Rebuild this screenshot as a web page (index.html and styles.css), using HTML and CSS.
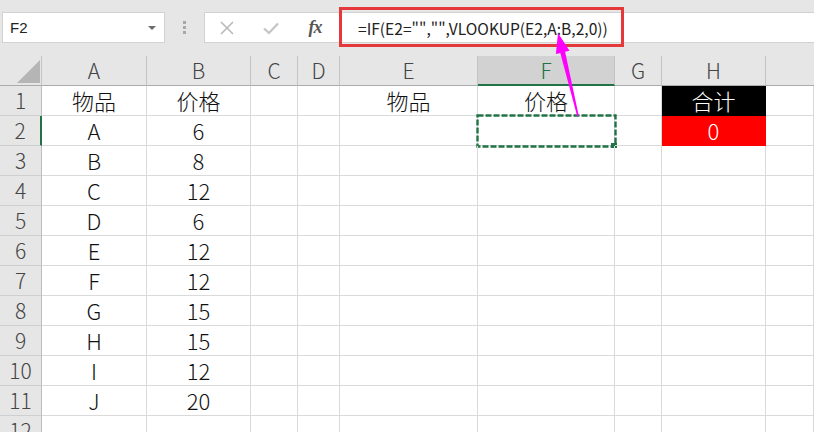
FILE: index.html
```html
<!DOCTYPE html>
<html lang="zh-CN">
<head>
<meta charset="utf-8">
<title>Excel VLOOKUP</title>
<link rel="stylesheet" href="styles.css">
</head>
<body>
<div class="app">
  <div class="toolbar">
    <div class="namebox"><span class="nb-text">F2</span><span class="caret"></span></div>
    <div class="grip"><i></i><i></i><i></i></div>
    <div class="fbar">
      <div class="ficons">
        <span class="fic"><svg width="16" height="16" viewBox="0 0 16 16"><path d="M2 2 L14 14 M14 2 L2 14" stroke="#b9b9b9" stroke-width="1.6" fill="none"/></svg></span>
        <span class="fic"><svg width="18" height="16" viewBox="0 0 18 16"><path d="M2 8.5 L7 13 L16 3.5" stroke="#c4c4c4" stroke-width="2.2" fill="none"/></svg></span>
        <span class="fic fx">fx</span>
      </div>
      <div class="ftext">=IF(E2="","",VLOOKUP(E2,A:B,2,0))</div>
    </div>
    <div class="hl"></div>
  </div>

  <div class="sheet">
    <div class="row hdr">
      <div class="corner"><svg width="42" height="30" viewBox="0 0 42 30"><polygon points="17,27 40,27 40,4" fill="#b5b5b5"/></svg></div>
      <div class="ch">A</div><div class="ch">B</div><div class="ch">C</div><div class="ch">D</div><div class="ch">E</div><div class="ch sel">F</div><div class="ch">G</div><div class="ch">H</div><div class="ch last"></div>
    </div>
    <div class="row">
      <div class="rh">1</div><div class="c">物品</div><div class="c">价格</div><div class="c"></div><div class="c"></div><div class="c">物品</div><div class="c">价格</div><div class="c"></div><div class="c black">合计</div><div class="c"></div>
    </div>
    <div class="row">
      <div class="rh selrow">2</div><div class="c">A</div><div class="c">6</div><div class="c"></div><div class="c"></div><div class="c"></div><div class="c active"><svg class="ants" width="141" height="34" viewBox="0 0 141 34"><rect x="1.5" y="1.5" width="138" height="31" fill="none" stroke="#217346" stroke-width="2.4" stroke-dasharray="6 2"/><rect x="135" y="29" width="6" height="5" fill="#217346"/></svg></div><div class="c"></div><div class="c red">0</div><div class="c"></div>
    </div>
    <div class="row">
      <div class="rh">3</div><div class="c">B</div><div class="c">8</div><div class="c"></div><div class="c"></div><div class="c"></div><div class="c"></div><div class="c"></div><div class="c"></div><div class="c"></div>
    </div>
    <div class="row">
      <div class="rh">4</div><div class="c">C</div><div class="c">12</div><div class="c"></div><div class="c"></div><div class="c"></div><div class="c"></div><div class="c"></div><div class="c"></div><div class="c"></div>
    </div>
    <div class="row">
      <div class="rh">5</div><div class="c">D</div><div class="c">6</div><div class="c"></div><div class="c"></div><div class="c"></div><div class="c"></div><div class="c"></div><div class="c"></div><div class="c"></div>
    </div>
    <div class="row">
      <div class="rh">6</div><div class="c">E</div><div class="c">12</div><div class="c"></div><div class="c"></div><div class="c"></div><div class="c"></div><div class="c"></div><div class="c"></div><div class="c"></div>
    </div>
    <div class="row">
      <div class="rh">7</div><div class="c">F</div><div class="c">12</div><div class="c"></div><div class="c"></div><div class="c"></div><div class="c"></div><div class="c"></div><div class="c"></div><div class="c"></div>
    </div>
    <div class="row">
      <div class="rh">8</div><div class="c">G</div><div class="c">15</div><div class="c"></div><div class="c"></div><div class="c"></div><div class="c"></div><div class="c"></div><div class="c"></div><div class="c"></div>
    </div>
    <div class="row">
      <div class="rh">9</div><div class="c">H</div><div class="c">15</div><div class="c"></div><div class="c"></div><div class="c"></div><div class="c"></div><div class="c"></div><div class="c"></div><div class="c"></div>
    </div>
    <div class="row">
      <div class="rh">10</div><div class="c">I</div><div class="c">12</div><div class="c"></div><div class="c"></div><div class="c"></div><div class="c"></div><div class="c"></div><div class="c"></div><div class="c"></div>
    </div>
    <div class="row">
      <div class="rh">11</div><div class="c">J</div><div class="c">20</div><div class="c"></div><div class="c"></div><div class="c"></div><div class="c"></div><div class="c"></div><div class="c"></div><div class="c"></div>
    </div>
    <div class="row">
      <div class="rh">12</div><div class="c"></div><div class="c"></div><div class="c"></div><div class="c"></div><div class="c"></div><div class="c"></div><div class="c"></div><div class="c"></div><div class="c"></div>
    </div>
  </div>

  <svg class="arrow" width="814" height="432" viewBox="0 0 814 432">
    <polygon points="558,33 569.5,50.8 565.1,51.8 578.8,116 577.2,116.2 560.3,53 555.9,54" fill="#ff00ff"/>
  </svg>
</div>
</body>
</html>
```
FILE: styles.css
```css
html, body {
  margin: 0;
  padding: 0;
  width: 814px;
  height: 432px;
  overflow: hidden;
  background: #e6e6e6;
}

.app {
  position: relative;
  width: 814px;
  height: 432px;
  overflow: hidden;
  font-family: "Noto Sans CJK SC", "Noto Sans", sans-serif;
}

.toolbar {
  position: relative;
  height: 56px;
  box-sizing: border-box;
  padding-top: 12px;
  display: flex;
  align-items: flex-start;
  background: #e6e6e6;
}

.namebox {
  margin-left: 2px;
  width: 163px;
  height: 31px;
  box-sizing: border-box;
  background: #fff;
  border: 1px solid #d2d2d2;
  display: flex;
  align-items: center;
  justify-content: space-between;
  padding: 0 8px 0 7px;
}

.nb-text {
  font-family: "Liberation Sans", Arial, sans-serif;
  font-size: 15px;
  color: #222;
}

.caret {
  width: 0;
  height: 0;
  border-left: 4px solid transparent;
  border-right: 4px solid transparent;
  border-top: 4px solid #6a6a6a;
}

.grip {
  width: 39px;
  height: 31px;
  display: flex;
  flex-direction: column;
  align-items: center;
  justify-content: center;
  gap: 2px;
}

.grip i {
  display: block;
  width: 3px;
  height: 3px;
  background: #a8a8a8;
}

.fbar {
  flex: 1;
  height: 31px;
  box-sizing: border-box;
  background: #fff;
  border: 1px solid #d2d2d2;
  border-right: none;
  display: flex;
  align-items: center;
}

.ficons {
  width: 134px;
  display: flex;
  align-items: center;
}

.fic {
  width: 44px;
  height: 29px;
  display: flex;
  align-items: center;
  justify-content: center;
}

.fx {
  font-family: "Liberation Serif", "DejaVu Serif", serif;
  font-style: italic;
  font-weight: bold;
  font-size: 18px;
  color: #555;
  letter-spacing: -1px;
}

.ftext {
  padding-left: 19px;
  font-family: "Noto Sans CJK SC", "Noto Sans", sans-serif;
  font-size: 15.6px;
  color: #222;
  white-space: nowrap;
}

.hl {
  position: absolute;
  left: 339px;
  top: 7px;
  width: 285px;
  height: 40px;
  box-sizing: border-box;
  border: 3px solid #e5383b;
}

.sheet {
  background: #fff;
}

.row {
  display: grid;
  grid-template-columns: 42px 105px 104px 47px 42px 138px 137px 47px 104px 1fr;
  height: 30px;
}

.row > div {
  box-sizing: border-box;
  height: 30px;
  line-height: 29px;
  text-align: center;
  font-size: 22px;
  font-weight: 300;
  color: #111;
  border-right: 1px solid #dadada;
  border-bottom: 1px solid #dadada;
  position: relative;
}

.hdr > div {
  font-size: 21px;
  background: #e6e6e6;
  color: #444;
  border-right: 1px solid #c4c4c4;
  border-bottom: 1px solid #ababab;
}

.hdr > .corner {
  line-height: 0;
}

.hdr > .sel {
  background: #d2d2d2;
  color: #217346;
  border-bottom: 2px solid #217346;
}

.hdr > .last {
  border-right: none;
}

.row > .rh {
  font-size: 21px;
  background: #e6e6e6;
  color: #444;
  border-right: 1px solid #bdbdbd;
  border-bottom: 1px solid #cfcfcf;
}

.row > .selrow {
  border-right: 2px solid #217346;
}

.row > .black {
  background: #000;
  color: #fff;
  border-color: #000;
}

.row > .red {
  background: #ff0000;
  color: #fff;
  border-color: #ff0000;
}

.ants {
  position: absolute;
  left: -2px;
  top: -2px;
}

.arrow {
  position: absolute;
  left: 0;
  top: 0;
  pointer-events: none;
}
```
